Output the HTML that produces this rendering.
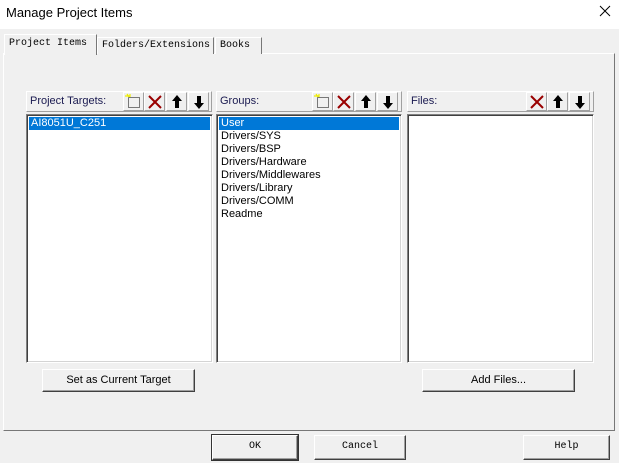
<!DOCTYPE html><html><head><style>
*{margin:0;padding:0;box-sizing:border-box}
body{width:619px;height:463px;background:#f0f0f0;position:relative;overflow:hidden;font-family:"Liberation Sans",Arial,sans-serif;font-size:11px;color:#000}
.a{position:absolute}
.mono{font-family:"Liberation Mono","Noto Sans CJK SC",monospace;font-size:10px}
.tab{position:absolute;border:1px solid #fff;border-right:1px solid #777;border-bottom:none;background:#f0f0f0;padding-left:4px;line-height:15px;white-space:nowrap}
.list{position:absolute;background:#fff;border:1px solid;border-color:#808080 #fff #fff #808080;box-shadow:inset 1px 1px 0 #404040,inset -1px -1px 0 #d4d4d4}
.hdr{position:absolute;border:1px solid;border-color:#fff #a0a0a0 #a0a0a0 #fff;height:21px;line-height:19px;padding-left:3px;color:#1a1a50}
.ib{position:absolute;top:92px;width:21px;height:19px;border:1px solid;border-color:#fff #a0a0a0 #a0a0a0 #fff}
.btn{position:absolute;border:1px solid;border-color:#fff #404040 #404040 #fff;box-shadow:inset -1px -1px 0 #a0a0a0;text-align:center;background:#f0f0f0}
.it{height:13px;line-height:13px;padding-left:2px;font-size:11px}
.sel{background:#0078d7;color:#fff}
</style></head><body>
<div class="a" style="left:0;top:0;width:619px;height:29px;background:#fff"></div>
<div class="a" style="left:6px;top:5px;font-size:13px">Manage Project Items</div>
<svg class="a" style="left:599px;top:5px" width="12" height="12"><path d="M1 1l10 10M11 1L1 11" stroke="#000" stroke-width="1"/></svg>
<div class="a" style="left:3px;top:53px;width:612px;height:378px;border:1px solid;border-color:#fff #777 #777 #fff"></div>
<div class="tab mono" style="left:97px;top:37px;width:117px;height:17px">Folders/Extensions</div>
<div class="tab mono" style="left:215px;top:37px;width:47px;height:17px">Books</div>
<div class="tab mono" style="left:4px;top:34px;width:93px;height:21px;border-bottom:none;z-index:2;line-height:17px">Project Items</div>

<div class="hdr" style="left:26px;top:91px;width:186px">Project Targets:</div>
<div class="hdr" style="left:216px;top:91px;width:186px">Groups:</div>
<div class="hdr" style="left:407px;top:91px;width:187px">Files:</div>

<svg class="a" style="left:0;top:0" width="619" height="120">
<defs>
<g id="n"><rect x="4.5" y="5.5" width="11" height="10" fill="none" stroke="#000" stroke-dasharray="1 1"/><path d="M3 2l2 3M6 2v3M1 4h5" stroke="#ee0" stroke-width="1.2"/></g>
<g id="x"><path d="M4 4l12 12M16 4L4 16" stroke="#900" stroke-width="2"/></g>
<g id="u"><path d="M10 3l5 6h-3v7h-4v-7h-3z" fill="#000"/></g>
<g id="d"><path d="M10 17l5-6h-3v-7h-4v7h-3z" fill="#000"/></g>
</defs>
<use href="#n" x="124" y="92"/><use href="#x" x="145" y="92"/><use href="#u" x="167" y="92"/><use href="#d" x="189" y="92"/>
<use href="#n" x="313" y="92"/><use href="#x" x="334" y="92"/><use href="#u" x="356" y="92"/><use href="#d" x="378" y="92"/>
<use href="#x" x="527" y="92"/><use href="#u" x="548" y="92"/><use href="#d" x="570" y="92"/>
</svg>
<div class="ib" style="left:123px"></div><div class="ib" style="left:144px"></div><div class="ib" style="left:166px"></div><div class="ib" style="left:188px"></div>
<div class="ib" style="left:312px"></div><div class="ib" style="left:333px"></div><div class="ib" style="left:355px"></div><div class="ib" style="left:377px"></div>
<div class="ib" style="left:526px"></div><div class="ib" style="left:547px"></div><div class="ib" style="left:569px"></div>

<div class="list" style="left:26px;top:114px;width:187px;height:249px;padding:2px">
<div class="it sel">AI8051U_C251</div></div>
<div class="list" style="left:216px;top:114px;width:186px;height:249px;padding:2px">
<div class="it sel">User</div><div class="it">Drivers/SYS</div><div class="it">Drivers/BSP</div><div class="it">Drivers/Hardware</div><div class="it">Drivers/Middlewares</div><div class="it">Drivers/Library</div><div class="it">Drivers/COMM</div><div class="it">Readme</div></div>
<div class="list" style="left:407px;top:114px;width:187px;height:249px"></div>

<div class="btn" style="left:42px;top:369px;width:153px;height:23px;line-height:21px">Set as Current Target</div>
<div class="btn" style="left:422px;top:369px;width:153px;height:23px;line-height:21px">Add Files...</div>
<div class="btn mono" style="left:212px;top:435px;width:86px;height:25px;line-height:22px;outline:1px solid #333">OK</div>
<div class="btn mono" style="left:314px;top:435px;width:92px;height:25px;line-height:22px">Cancel</div>
<div class="btn mono" style="left:523px;top:435px;width:87px;height:25px;line-height:22px">Help</div>
</body></html>
